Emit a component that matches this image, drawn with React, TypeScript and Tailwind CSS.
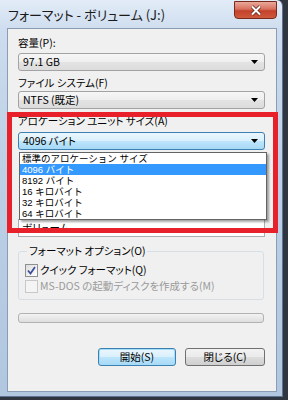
import clsx from "clsx";

const jp = "font-['Noto_Sans_CJK_JP','Noto_Sans',sans-serif] [font-feature-settings:'palt']";

const Arrow = () => (
  <svg width="7" height="4" viewBox="0 0 7 4" className="shrink-0">
    <path d="M0 0H7L3.5 4Z" fill="#000" />
  </svg>
);

const Combo = ({value, open}: {value: string; open?: boolean}) => (
  <div
    className={clsx(
      "h-[18px] w-[247px] rounded-[3px] border flex items-center pl-[4px] pr-[6px] text-[10.5px] leading-[16px] text-black",
      open
        ? "border-[#3c7fb1] bg-[linear-gradient(#eaf6fd_0%,#d9f0fc_50%,#bee6fd_50%,#a7d9f5_100%)]"
        : "border-[#a3a3a3] bg-[linear-gradient(#f6f6f6_0%,#eeeeee_50%,#e3e3e3_50%,#dcdcdc_100%)]"
    )}
  >
    <span className="flex-1">{value}</span>
    <Arrow />
  </div>
);

const Check = ({checked, disabled, label}: {checked?: boolean; disabled?: boolean; label: string}) => (
  <div className="flex items-center gap-[2px] h-[16px]">
    <div
      className={clsx(
        "size-[13px] border flex items-center justify-center",
        disabled ? "border-[#c8c8c8] bg-[#f4f4f4]" : "border-[#8e8f8f] bg-[linear-gradient(135deg,#dcdcdc,#ffffff)]"
      )}
    >
      {checked && (
        <svg width="9" height="9" viewBox="0 0 9 9">
          <path d="M1 4.5L3.5 7.5L8 1" fill="none" stroke="#3e4f9a" strokeWidth="1.8" />
        </svg>
      )}
    </div>
    <span className={clsx("text-[10.5px] leading-[14px]", disabled ? "text-[#9a9a9a]" : "text-black")}>{label}</span>
  </div>
);

const items = [
  "標準のアロケーション サイズ",
  "4096 バイト",
  "8192 バイト",
  "16 キロバイト",
  "32 キロバイト",
  "64 キロバイト",
];

const App = () => {
  return (
    <div className={clsx("relative w-[288px] h-[400px] overflow-hidden bg-[#2f3640]", jp)}>
      <div className="w-[283px] h-[397px] rounded-tr-[6px] border-r border-b border-[#5d7391] bg-[linear-gradient(#e2ecf7_0%,#cddcee_8%,#bdd0e6_40%,#b1c7e0_100%)] flex flex-col">
        {/* title bar */}
        <div className="h-[28px] flex items-start shrink-0">
          <div className="pl-[8px] pt-[7px] text-[13px] leading-[16px] text-[#1a1a1a] flex-1">
            フォーマット - ボリューム (J:)
          </div>
          <div className="mr-[5px] mt-[1px] w-[43px] h-[18px] rounded-b-[4px] border border-[#7a2a1c] bg-[linear-gradient(#e9a99b_0%,#d8705d_45%,#c4412a_55%,#cf5a3c_100%)] flex items-center justify-center">
            <svg width="12" height="11" viewBox="0 0 12 11">
              <path d="M2 1.5L10 9.5M10 1.5L2 9.5" stroke="#5a2016" strokeWidth="3.4" />
              <path d="M2 1.5L10 9.5M10 1.5L2 9.5" stroke="#ffffff" strokeWidth="2" />
            </svg>
          </div>
        </div>

        {/* client */}
        <div className="ml-[7px] w-[270px] h-[364px] border border-[#8a9db3] bg-[#f0f0f0] px-[10px] pt-[7px] flex flex-col text-black">
          <div className="text-[10.5px] leading-[14px]">容量(P):</div>
          <div className="mt-[3px]">
            <Combo value="97.1 GB" />
          </div>
          <div className="mt-[5px] text-[10.5px] leading-[14px]">ファイル システム(F)</div>
          <div className="mt-[1px]">
            <Combo value="NTFS (既定)" />
          </div>
          <div className="mt-[5px] text-[10.5px] leading-[14px]">アロケーション ユニット サイズ(A)</div>
          <div className="mt-[4px]">
            <Combo value="4096 バイト" open />
          </div>

          <div className="mt-[69px] h-[18px] w-[247px] border border-[#abadb3] bg-white pl-[3px] text-[10.5px] leading-[16px]">
            ボリューム
          </div>

          <fieldset className="mt-[7px] w-[246px] h-[56px] border border-[#d5dfe5] rounded-[3px] pl-[6px]">
            <legend className="ml-[2px] px-[2px] text-[10.5px] leading-[14px]">フォーマット オプション(O)</legend>
            <div className="mt-[4px] flex flex-col">
              <Check checked label="クイック フォーマット(Q)" />
              <Check disabled label="MS-DOS の起動ディスクを作成する(M)" />
            </div>
          </fieldset>

          <div className="mt-[13px] w-[246px] h-[10px] rounded-[3px] border border-[#b2b2b2] bg-[linear-gradient(#f3f3f3,#dedede)]" />

          <div className="mt-[25px] flex justify-end gap-[9px] pr-[1px]">
            <div className="w-[78px] h-[18px] rounded-[3px] border border-[#3c7fb1] bg-[linear-gradient(#eaf6fd_0%,#d9f0fc_50%,#bee6fd_50%,#a7d9f5_100%)] shadow-[0_0_0_1px_#a5dcf7_inset] flex items-center justify-center text-[10.5px] leading-[14px]">
              開始(S)
            </div>
            <div className="w-[80px] h-[18px] rounded-[3px] border border-[#707070] bg-[linear-gradient(#f2f2f2_0%,#ebebeb_50%,#dddddd_50%,#cfcfcf_100%)] flex items-center justify-center text-[10.5px] leading-[14px]">
              閉じる(C)
            </div>
          </div>
        </div>
      </div>

      {/* open dropdown list */}
      <div className="absolute left-[19px] top-[152px] w-[248px] h-[68px] border border-[#646464] bg-white shadow-[2px_2px_2px_rgba(0,0,0,0.35)] flex flex-col font-['Liberation_Sans','Noto_Sans_CJK_JP',sans-serif] [font-feature-settings:normal]">
        {items.map((it, i) => (
          <div
            key={i}
            className={clsx(
              "h-[11px] pl-[2px] text-[9.5px] leading-[11px]",
              i === 1 ? "bg-[#3399ff] text-white" : "text-black"
            )}
          >
            {it}
          </div>
        ))}
      </div>

      {/* red annotation */}
      <div className="absolute left-[7px] top-[112px] w-[271px] h-[121px] border-[5px] border-[#e8202a]" />
    </div>
  );
};

export default App;
